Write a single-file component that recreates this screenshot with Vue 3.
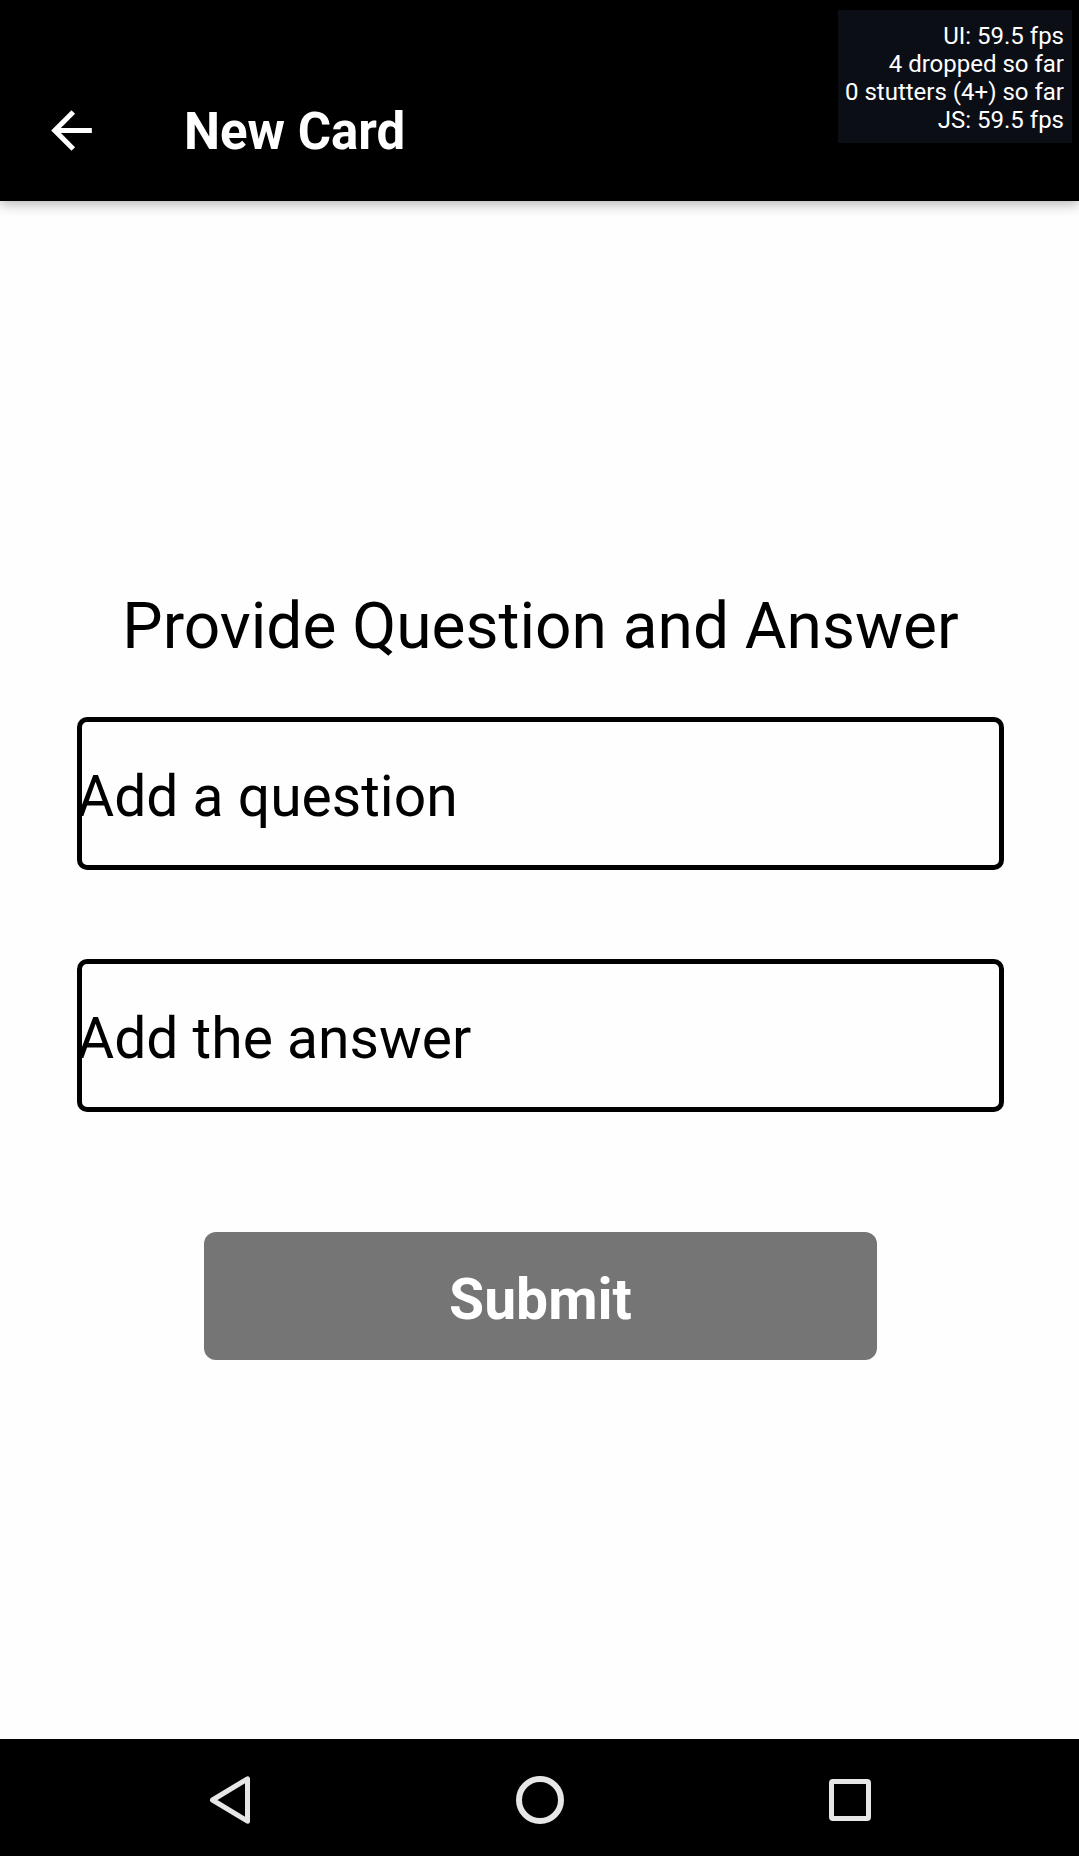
<script setup>
import { ref } from 'vue'

const question = ref('')
const answer = ref('')
const stats = ['UI: 59.5 fps', '4 dropped so far', '0 stutters (4+) so far', 'JS: 59.5 fps']
</script>

<template>
  <div class="screen">
    <header class="app-bar">
      <button class="icon-button back" type="button" aria-label="Back">
        <svg width="61" height="61" viewBox="0 0 24 24" aria-hidden="true">
          <path fill="#fff" d="M20 11H7.83l5.59-5.59L12 4l-8 8 8 8 1.41-1.41L7.83 13H20v-2z" />
        </svg>
      </button>
      <h1 class="title">New Card</h1>
      <div class="perf">
        <div v-for="line in stats" :key="line">{{ line }}</div>
      </div>
    </header>

    <main class="content">
      <form class="form" @submit.prevent>
        <h2 class="heading">Provide Question and Answer</h2>
        <div class="fields">
          <input v-model="question" class="field" type="text" placeholder="Add a question" aria-label="Add a question" />
          <input v-model="answer" class="field" type="text" placeholder="Add the answer" aria-label="Add the answer" />
        </div>
        <button class="submit" type="submit">Submit</button>
      </form>
    </main>

    <nav class="nav-bar" aria-label="System navigation">
      <button class="icon-button" type="button" aria-label="Back">
        <svg width="60" height="60" viewBox="0 0 60 60" fill="none" stroke="#e6e6e6" aria-hidden="true">
          <path d="M47.5 8.8v42.4L12.5 30z" stroke-width="5" stroke-linejoin="round" />
        </svg>
      </button>
      <button class="icon-button" type="button" aria-label="Home">
        <svg width="60" height="60" viewBox="0 0 60 60" fill="none" stroke="#e6e6e6" aria-hidden="true">
          <circle cx="30" cy="30" r="21" stroke-width="6" />
        </svg>
      </button>
      <button class="icon-button" type="button" aria-label="Recent apps">
        <svg width="60" height="60" viewBox="0 0 60 60" fill="none" stroke="#e6e6e6" aria-hidden="true">
          <rect x="11.5" y="11.5" width="37" height="37" rx="1.5" stroke-width="5" />
        </svg>
      </button>
    </nav>
  </div>
</template>

<style>
body {
  margin: 0;
  background: #fefefe;
}
</style>

<style scoped>
.screen {
  display: flex;
  flex-direction: column;
  min-height: 100vh;
  font-family: Roboto, "Liberation Sans", sans-serif;
  color: #000;
}

.app-bar {
  position: relative;
  display: flex;
  align-items: center;
  gap: 82px;
  box-sizing: border-box;
  height: 201px;
  padding: 60px 41px 0;
  background: #000;
  box-shadow: 0 3px 12px rgba(0, 0, 0, 0.3);
}

.icon-button {
  display: flex;
  padding: 0;
  border: 0;
  background: none;
}

.title {
  margin: 0;
  padding-top: 3px;
  font-size: 51px;
  line-height: 60px;
  font-weight: 700;
  color: #fff;
}

.perf {
  position: absolute;
  top: 10px;
  right: 7px;
  padding: 12px 8px 9px 7px;
  background: #0c0e16;
  color: #fff;
  font-size: 24px;
  line-height: 28px;
  text-align: right;
  white-space: nowrap;
}

.content {
  flex: 1;
  display: flex;
  flex-direction: column;
  justify-content: center;
  padding: 9px 75px 0 77px;
}

.form {
  display: flex;
  flex-direction: column;
  align-items: center;
}

.heading {
  margin: 0 0 53px;
  font-size: 64px;
  line-height: 75px;
  font-weight: 400;
  text-align: center;
  white-space: nowrap;
}

.fields {
  display: flex;
  flex-direction: column;
  gap: 89px;
  align-self: stretch;
}

.field {
  box-sizing: border-box;
  width: 100%;
  height: 153px;
  padding: 6px 0 0;
  border: 0;
  border-radius: 10px;
  outline: 0;
  background: transparent;
  box-shadow: inset 0 0 0 5px #000;
  font: 400 57px/66px Roboto, "Liberation Sans", sans-serif;
  color: #000;
}

.field::placeholder {
  color: #000;
  opacity: 1;
}

.submit {
  width: 673px;
  max-width: 100%;
  height: 128px;
  margin-top: 120px;
  padding: 8px 0 0;
  border: 0;
  border-radius: 12px;
  background: #757575;
  font: 700 57px/66px Roboto, "Liberation Sans", sans-serif;
  color: #fff;
}

.nav-bar {
  display: flex;
  justify-content: center;
  align-items: center;
  gap: 250px;
  box-sizing: border-box;
  height: 117px;
  padding-top: 5px;
  background: #000;
}
</style>
